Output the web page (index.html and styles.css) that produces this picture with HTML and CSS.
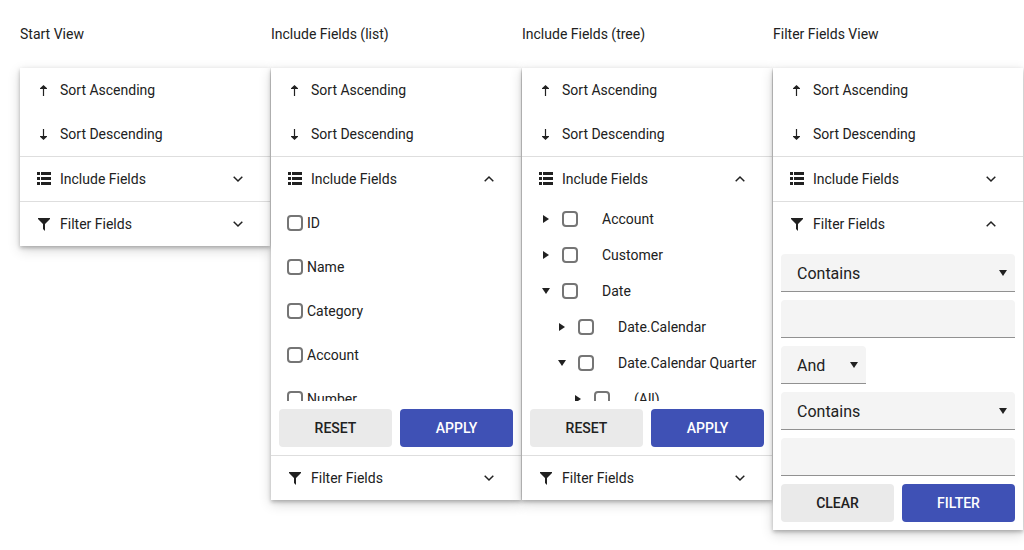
FILE: index.html
```html
<!DOCTYPE html>
<html lang="en">
<head>
<meta charset="utf-8">
<title>Column Menu Views</title>
<link rel="stylesheet" href="styles.css">
</head>
<body>
<svg class="sprite" aria-hidden="true">
  <symbol id="i-asc" viewBox="0 0 16 16"><path d="M7.5 3 11 6.2V7H8.100v7H6.900V7H4v-.8z"/></symbol>
  <symbol id="i-desc" viewBox="0 0 16 16"><path d="M7.5 14 11 10.800V10H8.100V3H6.900v7H4v.8z"/></symbol>
  <symbol id="i-list" viewBox="0 0 16 16"><path d="M1 1h3v3H1zM5 1h10v3H5zM1 6h3v3H1zM5 6h10v3H5zM1 11h3v3H1zM5 11h10v3H5z"/></symbol>
  <symbol id="i-filter" viewBox="0 0 16 16"><path d="M2 2h12v1L9 8v7l-2-2V8L2 3z"/></symbol>
  <symbol id="i-down" viewBox="0 0 16 16"><path d="M3.700 5.800 8 10l4.300-4.200" fill="none" stroke="currentColor" stroke-width="1.5"/></symbol>
  <symbol id="i-upchev" viewBox="0 0 16 16"><path d="M3.700 10.200 8 6l4.300 4.200" fill="none" stroke="currentColor" stroke-width="1.5"/></symbol>
  <symbol id="i-right-tri" viewBox="0 0 16 16"><path d="M5 4v8l6-4z"/></symbol>
  <symbol id="i-down-tri" viewBox="0 0 16 16"><path d="M4 5h8l-4 6z"/></symbol>
</svg>
<main class="views">
  <section class="view">
    <h2 class="title">Start View</h2>
    <div class="panel">
      <button class="item"><svg class="icon"><use href="#i-asc"/></svg>Sort Ascending</button>
      <button class="item"><svg class="icon"><use href="#i-desc"/></svg>Sort Descending</button>
      <div class="group">
        <button class="item"><svg class="icon"><use href="#i-list"/></svg>Include Fields<svg class="icon chevron"><use href="#i-down"/></svg></button>
      </div>
      <div class="group">
        <button class="item"><svg class="icon"><use href="#i-filter"/></svg>Filter Fields<svg class="icon chevron"><use href="#i-down"/></svg></button>
      </div>
    </div>
  </section>

  <section class="view">
    <h2 class="title">Include Fields (list)</h2>
    <div class="panel">
      <button class="item"><svg class="icon"><use href="#i-asc"/></svg>Sort Ascending</button>
      <button class="item"><svg class="icon"><use href="#i-desc"/></svg>Sort Descending</button>
      <div class="group">
        <button class="item"><svg class="icon"><use href="#i-list"/></svg>Include Fields<svg class="icon chevron"><use href="#i-upchev"/></svg></button>
        <div class="scroller">
          <label class="option"><input class="check" type="checkbox">ID</label>
          <label class="option"><input class="check" type="checkbox">Name</label>
          <label class="option"><input class="check" type="checkbox">Category</label>
          <label class="option"><input class="check" type="checkbox">Account</label>
          <label class="option"><input class="check" type="checkbox">Number</label>
        </div>
        <div class="actions"><button class="btn">RESET</button><button class="btn primary">APPLY</button></div>
      </div>
      <div class="group">
        <button class="item"><svg class="icon"><use href="#i-filter"/></svg>Filter Fields<svg class="icon chevron"><use href="#i-down"/></svg></button>
      </div>
    </div>
  </section>

  <section class="view">
    <h2 class="title">Include Fields (tree)</h2>
    <div class="panel">
      <button class="item"><svg class="icon"><use href="#i-asc"/></svg>Sort Ascending</button>
      <button class="item"><svg class="icon"><use href="#i-desc"/></svg>Sort Descending</button>
      <div class="group">
        <button class="item"><svg class="icon"><use href="#i-list"/></svg>Include Fields<svg class="icon chevron"><use href="#i-upchev"/></svg></button>
        <div class="scroller">
          <ul class="tree">
            <li><div class="node"><svg class="icon"><use href="#i-right-tri"/></svg><label class="node-label"><input class="check" type="checkbox">Account</label></div></li>
            <li><div class="node"><svg class="icon"><use href="#i-right-tri"/></svg><label class="node-label"><input class="check" type="checkbox">Customer</label></div></li>
            <li><div class="node"><svg class="icon"><use href="#i-down-tri"/></svg><label class="node-label"><input class="check" type="checkbox">Date</label></div>
              <ul class="tree">
                <li><div class="node"><svg class="icon"><use href="#i-right-tri"/></svg><label class="node-label"><input class="check" type="checkbox">Date.Calendar</label></div></li>
                <li><div class="node"><svg class="icon"><use href="#i-down-tri"/></svg><label class="node-label"><input class="check" type="checkbox">Date.Calendar Quarter</label></div>
                  <ul class="tree">
                    <li><div class="node"><svg class="icon"><use href="#i-right-tri"/></svg><label class="node-label"><input class="check" type="checkbox">(All)</label></div></li>
                  </ul>
                </li>
              </ul>
            </li>
          </ul>
        </div>
        <div class="actions"><button class="btn">RESET</button><button class="btn primary">APPLY</button></div>
      </div>
      <div class="group">
        <button class="item"><svg class="icon"><use href="#i-filter"/></svg>Filter Fields<svg class="icon chevron"><use href="#i-down"/></svg></button>
      </div>
    </div>
  </section>

  <section class="view">
    <h2 class="title">Filter Fields View</h2>
    <div class="panel">
      <button class="item"><svg class="icon"><use href="#i-asc"/></svg>Sort Ascending</button>
      <button class="item"><svg class="icon"><use href="#i-desc"/></svg>Sort Descending</button>
      <div class="group">
        <button class="item"><svg class="icon"><use href="#i-list"/></svg>Include Fields<svg class="icon chevron"><use href="#i-down"/></svg></button>
      </div>
      <div class="group">
        <button class="item"><svg class="icon"><use href="#i-filter"/></svg>Filter Fields<svg class="icon chevron"><use href="#i-upchev"/></svg></button>
        <form class="filters">
          <div class="drop"><select class="field" aria-label="First condition"><option>Contains</option></select><svg class="icon caret"><use href="#i-down-tri"/></svg></div>
          <input class="field" type="text" aria-label="First value">
          <div class="drop logic"><select class="field" aria-label="Logic"><option>And</option></select><svg class="icon caret"><use href="#i-down-tri"/></svg></div>
          <div class="drop"><select class="field" aria-label="Second condition"><option>Contains</option></select><svg class="icon caret"><use href="#i-down-tri"/></svg></div>
          <input class="field" type="text" aria-label="Second value">
        </form>
        <div class="actions"><button class="btn">CLEAR</button><button class="btn primary">FILTER</button></div>
      </div>
    </div>
  </section>
</main>
</body>
</html>
```
FILE: styles.css
```css
* { box-sizing: border-box; }

body {
  margin: 0;
  background: #fff;
  color: #212121;
  font: 14px/20px Roboto, sans-serif;
}

button, input, select { font: inherit; color: inherit; margin: 0; }

.sprite { display: none; }

.views {
  display: grid;
  grid-template-columns: repeat(4, minmax(0, 1fr));
  gap: 1px;
  align-items: start;
  padding: 24px 1px 20px 20px;
}

.title { margin: 0 0 24px; font-size: 14px; font-weight: 400; }

.panel {
  background: #fff;
  box-shadow: 0 2px 4px rgba(0, 0, 0, .26), 0 4px 12px rgba(0, 0, 0, .16);
}

.item {
  display: flex;
  align-items: center;
  gap: 8px;
  width: 100%;
  height: 44px;
  padding: 0 24px 0 16px;
  border: 0;
  background: none;
  text-align: left;
}

.icon { flex: none; width: 16px; height: 16px; fill: currentColor; }
.chevron { margin-left: auto; }

.group { border-top: 1px solid #dedede; }

.scroller { height: 200px; overflow: hidden; }

.option { display: flex; align-items: center; gap: 4px; height: 44px; padding: 0 16px; }

.check {
  appearance: none;
  flex: none;
  width: 16px;
  height: 16px;
  border: 2px solid #757575;
  border-radius: 4px;
  background: #fff;
}

.tree { margin: 0; padding: 0 0 0 16px; list-style: none; }
.node { display: flex; align-items: center; gap: 8px; height: 36px; }
.node-label { display: flex; align-items: center; gap: 24px; white-space: nowrap; }

.actions { display: grid; grid-template-columns: 1fr 1fr; gap: 8px; padding: 8px; }

.btn {
  height: 38px;
  padding: 0 16px;
  border: 0;
  border-radius: 4px;
  background: #eaeaea;
  font-weight: 500;
}
.primary { background: #3f51b5; color: #fff; }

.filters { display: grid; gap: 8px; padding: 8px 8px 0; }
.drop { display: grid; align-items: center; }
.drop > * { grid-area: 1 / 1; }
.logic { width: 85px; }

.field {
  appearance: none;
  width: 100%;
  height: 38px;
  padding: 2px 16px 0;
  border: 0;
  border-bottom: 1px solid #919191;
  border-radius: 4px 4px 0 0;
  background: #f4f4f4;
  font-size: 16px;
}
.caret { justify-self: end; margin-right: 4px; pointer-events: none; }
```
